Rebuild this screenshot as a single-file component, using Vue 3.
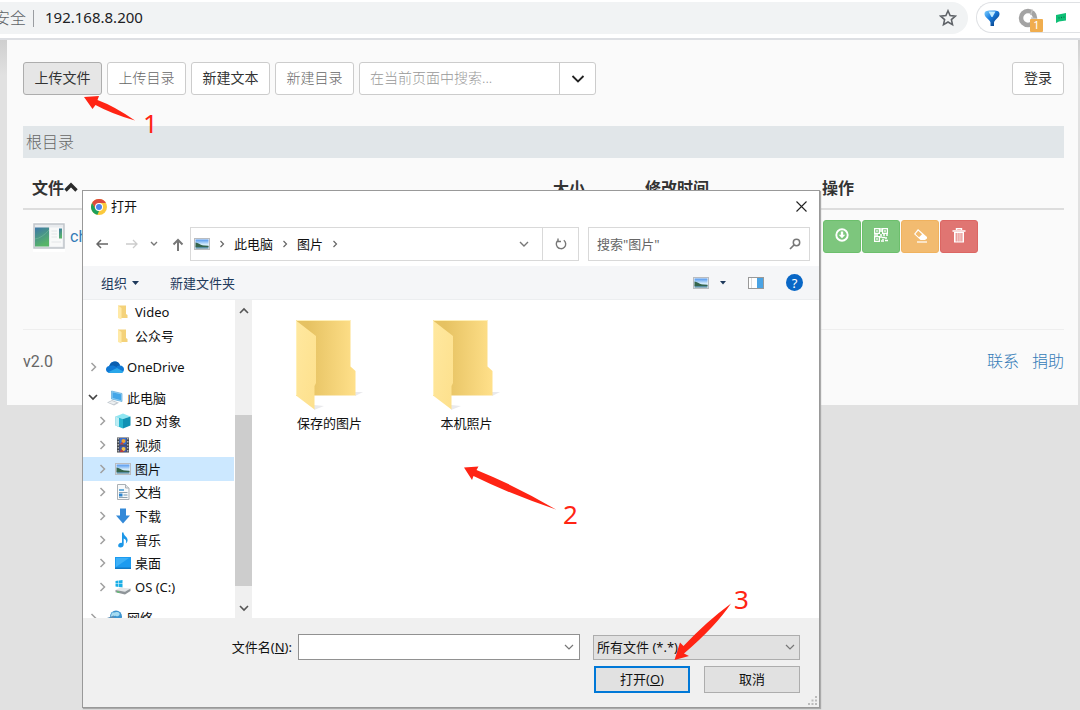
<script setup>
import { ref } from 'vue'

const toolbarButtons = [
  { label: '上传文件', state: 'active' },
  { label: '上传目录', state: 'muted' },
  { label: '新建文本', state: '' },
  { label: '新建目录', state: 'muted' }
]

const treeGroups = [
  {
    name: 'quick',
    items: [
      { label: 'Video', icon: 'folder-small', level: 2, arrow: '' },
      { label: '公众号', icon: 'folder-small', level: 2, arrow: '' }
    ]
  },
  {
    name: 'cloud',
    items: [{ label: 'OneDrive', icon: 'onedrive', level: 1, arrow: 'right' }]
  },
  {
    name: 'computer',
    items: [
      { label: '此电脑', icon: 'computer', level: 1, arrow: 'down' },
      { label: '3D 对象', icon: 'cube', level: 2, arrow: 'right' },
      { label: '视频', icon: 'film', level: 2, arrow: 'right' },
      { label: '图片', icon: 'picture', level: 2, arrow: 'right', selected: true },
      { label: '文档', icon: 'document', level: 2, arrow: 'right' },
      { label: '下载', icon: 'download', level: 2, arrow: 'right' },
      { label: '音乐', icon: 'music', level: 2, arrow: 'right' },
      { label: '桌面', icon: 'desktop', level: 2, arrow: 'right' },
      { label: 'OS (C:)', icon: 'drive', level: 2, arrow: 'right' }
    ]
  },
  {
    name: 'network',
    items: [{ label: '网络', icon: 'network', level: 1, arrow: 'right' }]
  }
]

const folders = ['保存的图片', '本机照片']
const search = ref('')
const dialogSearch = ref('')
const fileName = ref('')
const fileType = ref('all')
</script>

<template>
  <div class="screen">
    <svg class="symbols" width="0" height="0" aria-hidden="true">
      <defs>
        <linearGradient id="g-back" x1="0" y1="0" x2="1" y2="0">
          <stop offset="0.2" stop-color="#e6c262" />
          <stop offset="1" stop-color="#ffe08a" />
        </linearGradient>
        <linearGradient id="g-front" x1="0" y1="0" x2="1" y2="1">
          <stop offset="0" stop-color="#ffe89f" />
          <stop offset="1" stop-color="#fde08c" />
        </linearGradient>
        <linearGradient id="g-sky" x1="0" y1="0" x2="0" y2="1">
          <stop offset="0" stop-color="#4f96ef" />
          <stop offset="0.55" stop-color="#d5ecfb" />
          <stop offset="1" stop-color="#2f6f86" />
        </linearGradient>
        <linearGradient id="g-balloon" x1="0" y1="0" x2="1" y2="1">
          <stop offset="0" stop-color="#7ed0ff" />
          <stop offset="0.4" stop-color="#1b7fe0" />
          <stop offset="1" stop-color="#03306e" />
        </linearGradient>
        <linearGradient id="g-window" x1="0" y1="0" x2="0.4" y2="1">
          <stop offset="0" stop-color="#3c76a8" />
          <stop offset="1" stop-color="#58b568" />
        </linearGradient>
      </defs>
      <symbol id="picture" viewBox="0 0 16 16">
        <rect x="0.5" y="2.5" width="15" height="11" fill="#f3f4f5" stroke="#b9bcc0" />
        <rect x="1.5" y="3.5" width="13" height="9" fill="url(#g-sky)" />
        <path d="M1.5 6.500C4 6.500 6 9 9 9.500L14.500 10V11H1.500Z" fill="#35654c" />
      </symbol>
      <symbol id="folder-small" viewBox="0 0 16 16">
        <path d="M3 1.500H11V10L12.500 11V14H3Z" fill="#f4d27a" />
        <path d="M3 1.500L6.500 4V15.500L3 14Z" fill="#ffe9a6" />
      </symbol>
      <symbol id="onedrive" viewBox="0 0 18 16">
        <path d="M5 14C1 14 0 12 0 10.200C0 8.200 1.500 7 3.200 6.900C4.200 3.800 6.500 2.500 9 2.500C11.500 2.500 13.300 4 14 6.500C16.500 6.600 18 8.200 18 10.300C18 12.600 16.500 14 14.800 14Z" fill="#0f78d4" />
        <path d="M3.200 6.900C4.200 3.800 6.500 2.500 9 2.500C11.500 2.500 13.300 4 14 6.500C12 6.400 11 7.300 10.500 8C8.500 6.200 6 6 3.200 6.900Z" fill="#0a5eb0" />
        <path d="M2 13.300L11 9L17.300 12.500C16.700 13.500 15.800 14 14.800 14H5C3.700 14 2.700 13.800 2 13.300Z" fill="#29a7ea" />
      </symbol>
      <symbol id="computer" viewBox="0 0 16 16">
        <path d="M4.500 1L15 3.500V11.500L4.500 9Z" fill="#9ad3f5" stroke="#5aa7d8" stroke-width="0.700" />
        <path d="M5.500 2.200L14 4.300V10.200L5.500 8Z" fill="#44a6e8" />
        <path d="M0 12.500L5 10L12 12.800L7 15.500Z" fill="#c2c9cf" />
        <path d="M1.500 12.500L5 11L9.500 12.700L6.500 14.300Z" fill="#eceff1" />
      </symbol>
      <symbol id="cube" viewBox="0 0 16 16">
        <path d="M8 0.500L15.500 3.500L8 6L0.500 3.500Z" fill="#8fe6f2" />
        <path d="M0.500 3.500L8 6V15.500L0.500 12.500Z" fill="#28b6cf" />
        <path d="M15.500 3.500L8 6V15.500L15.500 12.500Z" fill="#1191b4" />
        <path d="M0.500 3.500L4 4.800V14L0.500 12.500Z" fill="#bcecf3" />
      </symbol>
      <symbol id="film" viewBox="0 0 16 16">
        <rect x="2" y="0.500" width="12" height="15" fill="#45484c" />
        <rect x="4.500" y="1" width="7" height="6.500" fill="#3c6fd0" />
        <rect x="4.500" y="8.500" width="7" height="6.500" fill="#3f59a8" />
        <circle cx="8.500" cy="4" r="2" fill="#f2a52c" />
        <path d="M4.500 7.500L7 5L9 7.500Z" fill="#ca4434" />
        <circle cx="8.500" cy="12" r="2" fill="#f3c344" />
        <path d="M4.500 15L6.500 12L9 15Z" fill="#b93a3a" />
        <path d="M3.200 1V15M12.800 1V15" stroke="#dfe3e6" stroke-width="1" stroke-dasharray="1.500 1.500" />
      </symbol>
      <symbol id="document" viewBox="0 0 16 16">
        <path d="M2.500 0.500H10.500L14 4V15.500H2.500Z" fill="#f7f9fa" stroke="#aab0b5" />
        <path d="M10.500 0.500V4H14" fill="#dfe3e6" stroke="#aab0b5" />
        <rect x="4" y="5" width="5" height="2" fill="#6ab1e0" />
        <path d="M4 8.500H12.500M4 13.500H12.500" stroke="#8fa3b0" />
        <rect x="4" y="9.500" width="3.500" height="3" fill="#2d86cf" />
        <path d="M8.500 11H12.500" stroke="#6e97b3" />
      </symbol>
      <symbol id="download" viewBox="0 0 16 16">
        <path d="M5 0.500H11V7.500H15L8 15.500L1 7.500H5Z" fill="#3389d8" />
      </symbol>
      <symbol id="music" viewBox="0 0 16 16">
        <path d="M7 0.500H8.500C8.700 4 13 5 12.600 8.300C12.400 10 11.600 11 10.800 11.500C11.800 9 10.800 7.300 8.700 6.500V12.500C8.700 14.500 7.300 15.500 5.500 15.500C3.900 15.500 3 14.500 3.200 13.200C3.500 11.500 5.300 10.500 7 11Z" fill="#1c97e8" />
      </symbol>
      <symbol id="desktop" viewBox="0 0 16 16">
        <rect x="0" y="2" width="16" height="12" fill="#1c9bf0" />
        <path d="M1 12L14 3H1Z" fill="#3db0f7" />
        <rect x="0" y="12.500" width="16" height="1.500" fill="#1279c4" />
      </symbol>
      <symbol id="drive" viewBox="0 0 16 16">
        <path d="M0.500 2L3.500 1.500V4.500H0.500ZM4 1.400L7.500 1V4.500H4ZM0.500 5H3.500V8L0.500 7.500ZM4 5H7.500V8.500L4 8Z" fill="#19aee6" />
        <path d="M0.500 11L5 8.500L15.500 9.500L10 13Z" fill="#e3e6e8" />
        <path d="M0.500 11L10 12.800L15.500 9.500V12L10 15.500L0.500 13.200Z" fill="#8f9599" />
        <path d="M2 12.800L4.500 13.300" stroke="#45d65a" />
      </symbol>
      <symbol id="network" viewBox="0 0 16 16">
        <circle cx="9" cy="6.500" r="6" fill="#3d94cf" />
        <path d="M5 2.500C8 3 10 1 12 2.500C14 5 11 7 9 6C7 5 6 8 3.500 7Z" fill="#a6dcf2" />
        <path d="M0 8L7 5.500V14.500L0 12.500Z" fill="#5b8eb5" />
      </symbol>
    </svg>

    <header class="browser-bar">
      <div class="address">
        <span class="insecure">安全</span>
        <span class="bar-divider"></span>
        <span class="url">192.168.8.200</span>
        <button class="plain star" aria-label="Bookmark">
          <svg width="18" height="18" viewBox="0 0 18 18"><path d="M9 1.800L11.100 6.600L16.300 7.100L12.400 10.600L13.500 15.700L9 13L4.500 15.700L5.600 10.600L1.700 7.100L6.900 6.600Z" fill="none" stroke="#5f6368" stroke-width="1.600" /></svg>
        </button>
      </div>
      <div class="extensions">
        <svg width="18" height="18" viewBox="0 0 18 18"><path d="M1.500 5C1.500 1.500 5 1.500 9 1.500C13 1.500 16.500 1.500 16.500 5C16.500 8.500 11.500 10.500 11 13.500V17H7.500V13.500C7 10.500 1.500 8.500 1.500 5Z" fill="url(#g-balloon)" /><path d="M5.500 2.500H12.500L9.500 8H8.500Z" fill="#c4ecff" /></svg>
        <span class="ring">
          <svg width="20" height="20" viewBox="0 0 20 20"><circle cx="10" cy="10" r="7" fill="none" stroke="#a3a3a3" stroke-width="4.500" /><path d="M14.500 1.500L12.500 7M19 11L13 10" stroke="#c5c5c5" stroke-width="1.300" /></svg>
          <span class="badge">1</span>
        </span>
        <svg width="12" height="12" viewBox="0 0 12 12"><path d="M1 3L11 1V8.500L4 9.500L1 11Z" fill="#0fbf76" /><path d="M3.500 6L4.500 5.800M6 5.600L7 5.400M8.500 5.200L9.500 5" stroke="#086f45" stroke-width="1.200" /></svg>
      </div>
    </header>

    <main class="page">
      <div class="toolbar">
        <button v-for="b in toolbarButtons" :key="b.label" class="btn" :class="b.state">{{ b.label }}</button>
        <div class="search-group">
          <input v-model="search" type="text" placeholder="在当前页面中搜索..." aria-label="在当前页面中搜索" />
          <button aria-label="展开">
            <svg width="14" height="10" viewBox="0 0 14 10"><path d="M1.500 2L7 7.500L12.500 2" fill="none" stroke="#222" stroke-width="1.800" /></svg>
          </button>
        </div>
        <button class="btn login">登录</button>
      </div>

      <nav class="crumb">根目录</nav>

      <table class="files">
        <colgroup><col /><col class="c-size" /><col class="c-time" /><col class="c-ops" /></colgroup>
        <thead>
          <tr>
            <th>文件<svg width="14" height="12" viewBox="0 0 14 12"><path d="M1.500 8.500L7 3L12.500 8.500" fill="none" stroke="#2b2b2b" stroke-width="3.400" /></svg></th>
            <th>大小</th>
            <th>修改时间</th>
            <th>操作</th>
          </tr>
        </thead>
        <tbody>
          <tr>
            <td>
              <a class="file" href="#">
                <svg width="32" height="30" viewBox="0 0 32 30"><rect width="32" height="30" fill="#fff" /><rect x="1" y="2" width="30" height="24" fill="#e8ebee" stroke="#c0c5ca" stroke-width="1.500" /><rect x="2" y="5.500" width="14" height="19" fill="url(#g-window)" /><path d="M2 17Q9 16 16 8" fill="none" stroke="#6fb59b" stroke-width="0.700" /><rect x="17" y="5.500" width="12.500" height="19" fill="#f8f9f9" /><rect x="26" y="6.500" width="3" height="10" fill="url(#g-window)" /><path d="M18.500 9H24M18.500 12H24M18.500 15H24M18.500 20H28" stroke="#e3e6e8" /></svg>
                <span>ch</span>
              </a>
            </td>
            <td></td>
            <td></td>
            <td>
              <div class="ops">
                <button class="green" aria-label="下载">
                  <svg width="14" height="14" viewBox="0 0 14 14"><circle cx="7" cy="7" r="5.700" fill="none" stroke="#fff" stroke-width="1.900" /><path d="M5.800 3.500H8.200V6.700H10.300L7 10.300L3.700 6.700H5.800Z" fill="#fff" /></svg>
                </button>
                <button class="green" aria-label="二维码">
                  <svg width="14" height="14" viewBox="0 0 14 14" fill="none" stroke="#fff"><path d="M0.600 0.600H5.400V5.400H0.600ZM8.600 0.600H13.400V5.400H8.600ZM0.600 8.600H5.400V13.400H0.600Z" stroke-width="1.200" /><path d="M2.200 3H3.800M10.200 3H11.800M2.200 11H3.800M7 0V4M6 7H8M0 7H4M9 7H11M12 7H14M7 8V10M8 9.500H11M12 9V11M9 11V14M7 13H8M11 12.500H14" stroke-width="1.500" /></svg>
                </button>
                <button class="orange" aria-label="重命名">
                  <svg width="15" height="15" viewBox="0 0 15 15"><path d="M5 1L14 9V10.500L12 12H7.500L1 6Z" fill="#fff" /><path d="M5.200 2.800L9 6.200L6 9.200L2.500 6Z" fill="#f2bb70" /><path d="M4 14H14" stroke="#fff" stroke-width="1.200" /></svg>
                </button>
                <button class="red" aria-label="删除">
                  <svg width="14" height="15" viewBox="0 0 14 15"><path d="M4.500 2V0.700H9.500V2M0.500 3H13.500" fill="none" stroke="#fff" stroke-width="1.400" /><path d="M2 4H12V14.500H2Z" fill="#fff" /><path d="M4.200 5V13.500M6.100 5V13.500M8 5V13.500M9.900 5V13.500" stroke="#d9534f" stroke-width="0.800" /></svg>
                </button>
              </div>
            </td>
          </tr>
        </tbody>
      </table>

      <footer class="page-footer">
        <span>v2.0</span>
        <div class="links"><a href="#">联系</a><a href="#">捐助</a></div>
      </footer>
    </main>

    <section class="dialog" role="dialog" aria-label="打开">
      <div class="title-bar">
        <svg width="16" height="16" viewBox="0 0 16 16"><circle cx="8" cy="8" r="8" fill="#fbc93d" /><path d="M1.070 4A8 8 0 0 1 14.930 4H8L4.500 10Z" fill="#dc4b3e" /><path d="M1.070 4L4.540 10L8 12L6.500 15.860A8 8 0 0 1 1.070 4Z" fill="#1ba05c" /><circle cx="8" cy="8" r="4" fill="#fff" /><circle cx="8" cy="8" r="3" fill="#4a83ee" /></svg>
        <span>打开</span>
        <button class="plain close" aria-label="关闭">
          <svg width="11" height="11" viewBox="0 0 11 11"><path d="M0.500 0.500L10.500 10.500M10.500 0.500L0.500 10.500" stroke="#222" stroke-width="1.100" /></svg>
        </button>
      </div>

      <div class="nav-bar">
        <div class="nav-buttons">
          <button class="plain" aria-label="后退"><svg width="12" height="12" viewBox="0 0 12 12"><path d="M12 6H1M5 2L1 6L5 10" fill="none" stroke="#666" stroke-width="1.500" /></svg></button>
          <button class="plain forward" aria-label="前进"><svg width="12" height="12" viewBox="0 0 12 12"><path d="M0 6H11M7 2L11 6L7 10" fill="none" stroke="#ccc" stroke-width="1.300" /></svg></button>
          <button class="plain" aria-label="最近"><svg width="8" height="6" viewBox="0 0 8 6"><path d="M1 1L4 4L7 1" fill="none" stroke="#777" stroke-width="1.400" /></svg></button>
          <button class="plain" aria-label="向上"><svg width="12" height="13" viewBox="0 0 12 13"><path d="M6 13V2M1.500 6.500L6 2L10.500 6.500" fill="none" stroke="#777" stroke-width="2" /></svg></button>
        </div>
        <div class="path-box">
          <svg width="16" height="16"><use href="#picture" /></svg>
          <svg class="sep" width="6" height="8" viewBox="0 0 6 8"><path d="M1.500 1L4.500 4L1.500 7" fill="none" stroke="#666" stroke-width="1.200" /></svg>
          <span>此电脑</span>
          <svg class="sep" width="6" height="8" viewBox="0 0 6 8"><path d="M1.500 1L4.500 4L1.500 7" fill="none" stroke="#666" stroke-width="1.200" /></svg>
          <span>图片</span>
          <svg class="sep" width="6" height="8" viewBox="0 0 6 8"><path d="M1.500 1L4.500 4L1.500 7" fill="none" stroke="#666" stroke-width="1.200" /></svg>
          <button class="plain drop" aria-label="历史"><svg width="10" height="7" viewBox="0 0 10 7"><path d="M1 1L5 5L9 1" fill="none" stroke="#777" stroke-width="1.400" /></svg></button>
          <button class="refresh" aria-label="刷新"><svg width="12" height="12" viewBox="0 0 12 12"><path d="M8.800 2.200A4.700 4.700 0 1 1 3.500 2M3 0.500V3.500H6" fill="none" stroke="#777" stroke-width="1.400" /></svg></button>
        </div>
        <div class="find-box">
          <input v-model="dialogSearch" type="text" placeholder='搜索"图片"' aria-label="搜索图片" />
          <svg width="12" height="12" viewBox="0 0 12 12"><circle cx="7.500" cy="4.500" r="3.200" fill="none" stroke="#777" stroke-width="1.500" /><path d="M5 7L1 11" stroke="#777" stroke-width="1.700" /></svg>
        </div>
      </div>

      <div class="command-bar">
        <button class="plain organize">组织<svg width="7" height="4" viewBox="0 0 7 4"><path d="M0 0H7L3.500 4Z" fill="#1e395b" /></svg></button>
        <button class="plain">新建文件夹</button>
        <div class="view-tools">
          <button class="plain view" aria-label="视图"><svg width="16" height="16"><use href="#picture" /></svg><svg width="6" height="4" viewBox="0 0 6 4"><path d="M0 0H6L3 3.500Z" fill="#1e395b" /></svg></button>
          <button class="plain" aria-label="预览窗格"><svg width="16" height="12" viewBox="0 0 16 12"><rect x="0.500" y="0.500" width="15" height="11" fill="#fff" stroke="#999" /><path d="M3.500 1V11" stroke="#ddd" /><rect x="9" y="1" width="6" height="10" fill="#4aa3e4" /></svg></button>
          <button class="plain help" aria-label="帮助">?</button>
        </div>
      </div>

      <div class="dialog-body">
        <div class="tree">
          <ul v-for="g in treeGroups" :key="g.name" :class="g.name">
            <li v-for="item in g.items" :key="item.label" :class="['level-' + item.level, { selected: item.selected }]">
              <span class="arrow">
                <svg v-if="item.arrow === 'right'" width="7" height="10" viewBox="0 0 7 10"><path d="M1.500 1L5.500 5L1.500 9" fill="none" stroke="#a0a0a0" stroke-width="1.500" /></svg>
                <svg v-else-if="item.arrow === 'down'" width="10" height="7" viewBox="0 0 10 7"><path d="M1 1L5 5L9 1" fill="none" stroke="#444" stroke-width="1.700" /></svg>
              </span>
              <svg class="tree-icon" height="16"><use :href="'#' + item.icon" /></svg>
              <span>{{ item.label }}</span>
            </li>
          </ul>
        </div>
        <div class="scrollbar">
          <button class="plain" aria-label="向上滚动"><svg width="10" height="7" viewBox="0 0 10 7"><path d="M1 6L5 2L9 6" fill="none" stroke="#555" stroke-width="1.600" /></svg></button>
          <div class="track"><div class="thumb"></div></div>
          <button class="plain" aria-label="向下滚动"><svg width="10" height="7" viewBox="0 0 10 7"><path d="M1 1L5 5L9 1" fill="none" stroke="#555" stroke-width="1.600" /></svg></button>
        </div>
        <div class="folder-list">
          <figure v-for="name in folders" :key="name">
            <svg width="68" height="90" viewBox="0 0 68 90">
              <path d="M59 72L67 72L59 76ZM18 85L28 86L18 90Z" fill="#e9e9ec" />
              <path d="M0 0H54.500V46.500L59.500 51V75.500H0Z" fill="url(#g-back)" />
              <path d="M0 0.500L20 16V63L18.500 66V89.500L0 75.500Z" fill="url(#g-front)" />
              <path d="M0.500 75V0.500H54" fill="none" stroke="#fff0b8" />
            </svg>
            <figcaption>{{ name }}</figcaption>
          </figure>
        </div>
      </div>

      <div class="dialog-footer">
        <div class="name-row">
          <label for="file-name">文件名(<u>N</u>):</label>
          <div class="name-box">
            <input id="file-name" v-model="fileName" type="text" />
            <svg width="10" height="7" viewBox="0 0 10 7"><path d="M1 1L5 5L9 1" fill="none" stroke="#777" stroke-width="1.200" /></svg>
          </div>
          <div class="type-box">
            <select v-model="fileType" aria-label="文件类型"><option value="all">所有文件 (*.*)</option></select>
            <svg width="10" height="7" viewBox="0 0 10 7"><path d="M1 1L5 5L9 1" fill="none" stroke="#777" stroke-width="1.200" /></svg>
          </div>
        </div>
        <div class="action-row">
          <button class="primary">打开(<u>O</u>)</button>
          <button>取消</button>
        </div>
        <svg class="grip" width="10" height="10" viewBox="0 0 10 10"><path d="M7 0H9V2H7ZM7 3.500H9V5.500H7ZM3.500 3.500H5.500V5.500H3.500ZM7 7H9V9H7ZM3.500 7H5.500V9H3.500ZM0 7H2V9H0Z" fill="#bbb" /></svg>
      </div>
    </section>

    <svg class="notes" width="1080" height="710" viewBox="0 0 1080 710">
      <g fill="#ff2414">
        <path d="M84 97L99 96L97.500 100Q114 106 135 120.500Q112 114 95.500 105L92.500 109Z" />
        <path d="M464 467.500L478.500 466.500L476.500 470Q516 486 556 509.500Q510 494 473.500 476L472 480Z" />
        <path d="M674.500 660L680 642.500L683.500 646Q706 622 731 603.500Q716 626 684 653.500L689 656Z" />
        <text x="143" y="133">1</text>
        <text x="563" y="524">2</text>
        <text x="734" y="609">3</text>
      </g>
    </svg>
  </div>
</template>

<style>
body {
  background: #e1e1e1;
}
</style>

<style scoped>
* {
  box-sizing: border-box;
}
.screen {
  position: relative;
  min-height: 100vh;
  overflow: hidden;
  background: linear-gradient(#cfcfcf 40px, #e1e1e1 76px);
  font: 14px/20px "Noto Sans", "Noto Sans CJK SC", sans-serif;
  color: #333;
}
svg {
  display: block;
  flex: none;
}
.symbols {
  position: absolute;
}
button,
input,
select {
  font: inherit;
  color: inherit;
  margin: 0;
}
.plain {
  display: flex;
  align-items: center;
  border: 0;
  padding: 0;
  background: none;
}
a {
  color: #337ab7;
  text-decoration: none;
}

.browser-bar {
  display: flex;
  align-items: flex-start;
  gap: 8px;
  height: 40px;
  padding-top: 2px;
  background: #fff;
  border-bottom: 2px solid #dddfe3;
}
.address {
  flex: 1;
  display: flex;
  align-items: center;
  height: 32px;
  padding-right: 11px;
  border-radius: 0 16px 16px 0;
  background: #f1f3f4;
}
.insecure {
  margin-left: -6px;
  font-size: 16px;
  font-weight: 300;
  color: #5f6368;
}
.bar-divider {
  width: 1px;
  height: 17px;
  margin: 0 11px 0 7px;
  background: #9a9da1;
}
.url {
  padding-bottom: 2px;
  font-size: 15px;
  color: #202124;
}
.star {
  margin-left: auto;
}
.extensions {
  display: flex;
  align-items: center;
  gap: 17px;
  width: 104px;
  height: 31px;
  padding-left: 6px;
  border: 1px solid #dfe1e4;
  border-right: 0;
  border-radius: 16px 0 0 16px;
}
.ring {
  position: relative;
}
.badge {
  position: absolute;
  left: 12px;
  top: 11px;
  width: 13px;
  height: 13px;
  border-radius: 1px;
  background: #f0ad4e;
  color: #fff;
  font-size: 11px;
  line-height: 12px;
  text-align: center;
}

.page {
  margin: 0 2px 0 7px;
  padding: 22px 14px 31px 16px;
  background: #fafafa;
}
.toolbar {
  display: flex;
  gap: 5px;
  height: 33px;
}
.btn {
  width: 79px;
  border: 1px solid #ccc;
  border-radius: 3px;
  padding: 0 0 2px;
  background: #fff;
}
.btn.active {
  background: #e6e6e6;
  border-color: #adadad;
}
.btn.muted {
  color: #666;
  font-weight: 300;
}
.btn.login {
  width: 52px;
  margin-left: auto;
}
.search-group {
  display: flex;
  width: 237px;
  border: 1px solid #ccc;
  border-radius: 3px;
  background: #fff;
}
.search-group input {
  flex: 1;
  min-width: 0;
  border: 0;
  padding: 0 10px 2px;
  background: none;
  outline: 0;
  font-weight: 300;
}
.search-group input::placeholder {
  color: #999;
}
.search-group button {
  display: flex;
  align-items: center;
  justify-content: center;
  width: 36px;
  border: 0;
  border-left: 1px solid #ccc;
  padding: 0;
  background: none;
}
.crumb {
  margin-top: 31px;
  padding: 4px 3px;
  background: #e1e6e9;
  color: #666;
  font-size: 16px;
  font-weight: 300;
  line-height: 24px;
}
.files {
  width: 100%;
  margin-top: 10px;
  table-layout: fixed;
  border-collapse: collapse;
  font-size: 16px;
  line-height: 24px;
}
.c-size {
  width: 92px;
}
.c-time {
  width: 177px;
}
.c-ops {
  width: 251px;
}
.files th {
  padding: 8px 9px;
  border-bottom: 2px solid #ddd;
  text-align: left;
}
.files th svg {
  display: inline-block;
}
.files td {
  padding: 10px 9px;
}
.file {
  display: flex;
  align-items: center;
  gap: 5px;
  padding-left: 1px;
  font-family: Roboto, sans-serif;
}
.ops {
  display: flex;
  gap: 1px;
  margin-left: 1px;
}
.ops button {
  display: flex;
  justify-content: center;
  width: 38px;
  height: 33px;
  padding: 7px 0 0;
  border: 1px solid;
  border-radius: 3px;
}
.ops .green {
  background: #7dc67d;
  border-color: #6cbf6c;
}
.ops .orange {
  background: #f2bb70;
  border-color: #f0b25e;
}
.ops .red {
  background: #e07572;
  border-color: #dc6663;
}
.page-footer {
  display: flex;
  justify-content: space-between;
  margin-top: 66px;
  padding-top: 20px;
  border-top: 1px solid #eee;
  color: #666;
  font: 16px/24px Roboto, "Noto Sans CJK SC", sans-serif;
}
.links {
  display: flex;
  gap: 13px;
  font-weight: 300;
}

.dialog {
  position: absolute;
  left: 82px;
  right: 260px;
  top: 190px;
  border: 1px solid #999;
  background: #fff;
  box-shadow: 1px 1px 1px #aaa;
  font-size: 13px;
  color: #111;
}
.title-bar {
  display: flex;
  align-items: center;
  gap: 4px;
  height: 31px;
  padding: 0 12px 0 8px;
}
.title-bar span {
  padding-bottom: 2px;
}
.close {
  margin-left: auto;
}
.nav-bar {
  display: flex;
  gap: 9px;
  padding: 5px 9px 5px 13px;
}
.nav-buttons {
  display: flex;
  align-items: center;
  gap: 14px;
  width: 85px;
}
.forward {
  margin: 0 -2px 0 4px;
}
.path-box {
  flex: 1;
  display: flex;
  align-items: center;
  height: 34px;
  padding-left: 3px;
  border: 1px solid #d9d9d9;
}
.sep {
  margin: 0 9px;
}
.drop {
  margin: 0 13px 0 auto;
}
.refresh {
  display: flex;
  align-items: center;
  justify-content: center;
  width: 36px;
  height: 100%;
  border: 0;
  border-left: 1px solid #d9d9d9;
  padding: 0;
  background: none;
}
.find-box {
  display: flex;
  align-items: center;
  width: 222px;
  padding: 0 8px;
  border: 1px solid #d9d9d9;
}
.find-box input {
  flex: 1;
  min-width: 0;
  border: 0;
  padding: 0;
  outline: 0;
}
.find-box input::placeholder {
  color: #666;
}
.command-bar {
  display: flex;
  align-items: center;
  gap: 31px;
  height: 34px;
  padding: 0 16px 0 18px;
  background: #f5f6f8;
  border-bottom: 1px solid #eceef0;
  color: #1e395b;
}
.organize {
  gap: 5px;
}
.view-tools {
  display: flex;
  align-items: center;
  gap: 22px;
  margin-left: auto;
}
.view {
  gap: 11px;
}
.help {
  justify-content: center;
  width: 17px;
  height: 17px;
  border-radius: 50%;
  background: #0967c6;
  color: #fff;
}
.dialog-body {
  display: flex;
  height: 318px;
}
.tree {
  width: 151px;
  overflow: hidden;
}
.tree ul {
  display: grid;
  grid-auto-rows: 1fr;
  height: 24px;
  margin: 0 0 7px;
  padding: 0;
  list-style: none;
}
.tree ul.quick {
  height: 48px;
}
.tree ul.computer {
  height: 213px;
}
.tree li {
  display: flex;
  align-items: center;
  gap: 4px;
  white-space: nowrap;
}
.level-1 {
  padding-left: 5px;
}
.level-2 {
  padding-left: 14px;
}
.selected {
  background: #cce8ff;
}
.arrow {
  display: flex;
  justify-content: center;
  width: 10px;
}
.tree-icon {
  width: 16px;
}
.level-1 .tree-icon {
  width: 18px;
  margin-left: 4px;
}
.level-1 .tree-icon + span {
  margin-left: -1px;
}
.level-2 .tree-icon {
  margin-left: 4px;
}
.scrollbar {
  display: flex;
  flex-direction: column;
  width: 17px;
  margin-left: 1px;
  background: #f0f0f0;
}
.scrollbar button {
  justify-content: center;
  height: 20px;
}
.track {
  flex: 1;
  display: flex;
  flex-direction: column;
  justify-content: flex-end;
  padding-bottom: 12px;
}
.thumb {
  height: 171px;
  background: #cdcdcd;
}
.folder-list {
  flex: 1;
  display: flex;
  align-items: flex-start;
  padding: 20px 0 0 9px;
}
figure {
  display: flex;
  flex-direction: column;
  align-items: center;
  gap: 3px;
  width: 137px;
  margin: 0;
}
.dialog-footer {
  position: relative;
  padding: 16px 19px 14px;
  background: #f0f0f0;
}
.name-row {
  display: flex;
  align-items: center;
}
.name-row label {
  width: 190px;
  margin-right: 6px;
  text-align: right;
}
.name-box {
  flex: 1;
  display: flex;
  align-items: center;
  height: 26px;
  margin-right: 13px;
  padding-right: 5px;
  border: 1px solid #919191;
  background: #fff;
}
.name-box input {
  flex: 1;
  min-width: 0;
  border: 0;
  padding: 0 4px;
  outline: 0;
}
.type-box {
  display: grid;
  align-items: center;
  width: 207px;
}
.type-box select,
.type-box svg {
  grid-area: 1 / 1;
}
.type-box svg {
  justify-self: end;
  margin-right: 5px;
  pointer-events: none;
}
.type-box select {
  appearance: none;
  height: 25px;
  padding: 0 3px;
  border: 1px solid #adadad;
  border-radius: 0;
  background: #e1e1e1;
}
.action-row {
  display: flex;
  justify-content: flex-end;
  gap: 14px;
  margin-top: 6px;
}
.action-row button {
  width: 96px;
  height: 27px;
  border: 1px solid #adadad;
  padding: 0 0 2px;
  background: #e1e1e1;
}
.action-row .primary {
  border: 2px solid #0078d7;
}
.grip {
  position: absolute;
  right: 1px;
  bottom: 1px;
}
.notes {
  position: absolute;
  left: 0;
  top: 0;
  pointer-events: none;
}
.notes text {
  font-size: 26px;
}
</style>
